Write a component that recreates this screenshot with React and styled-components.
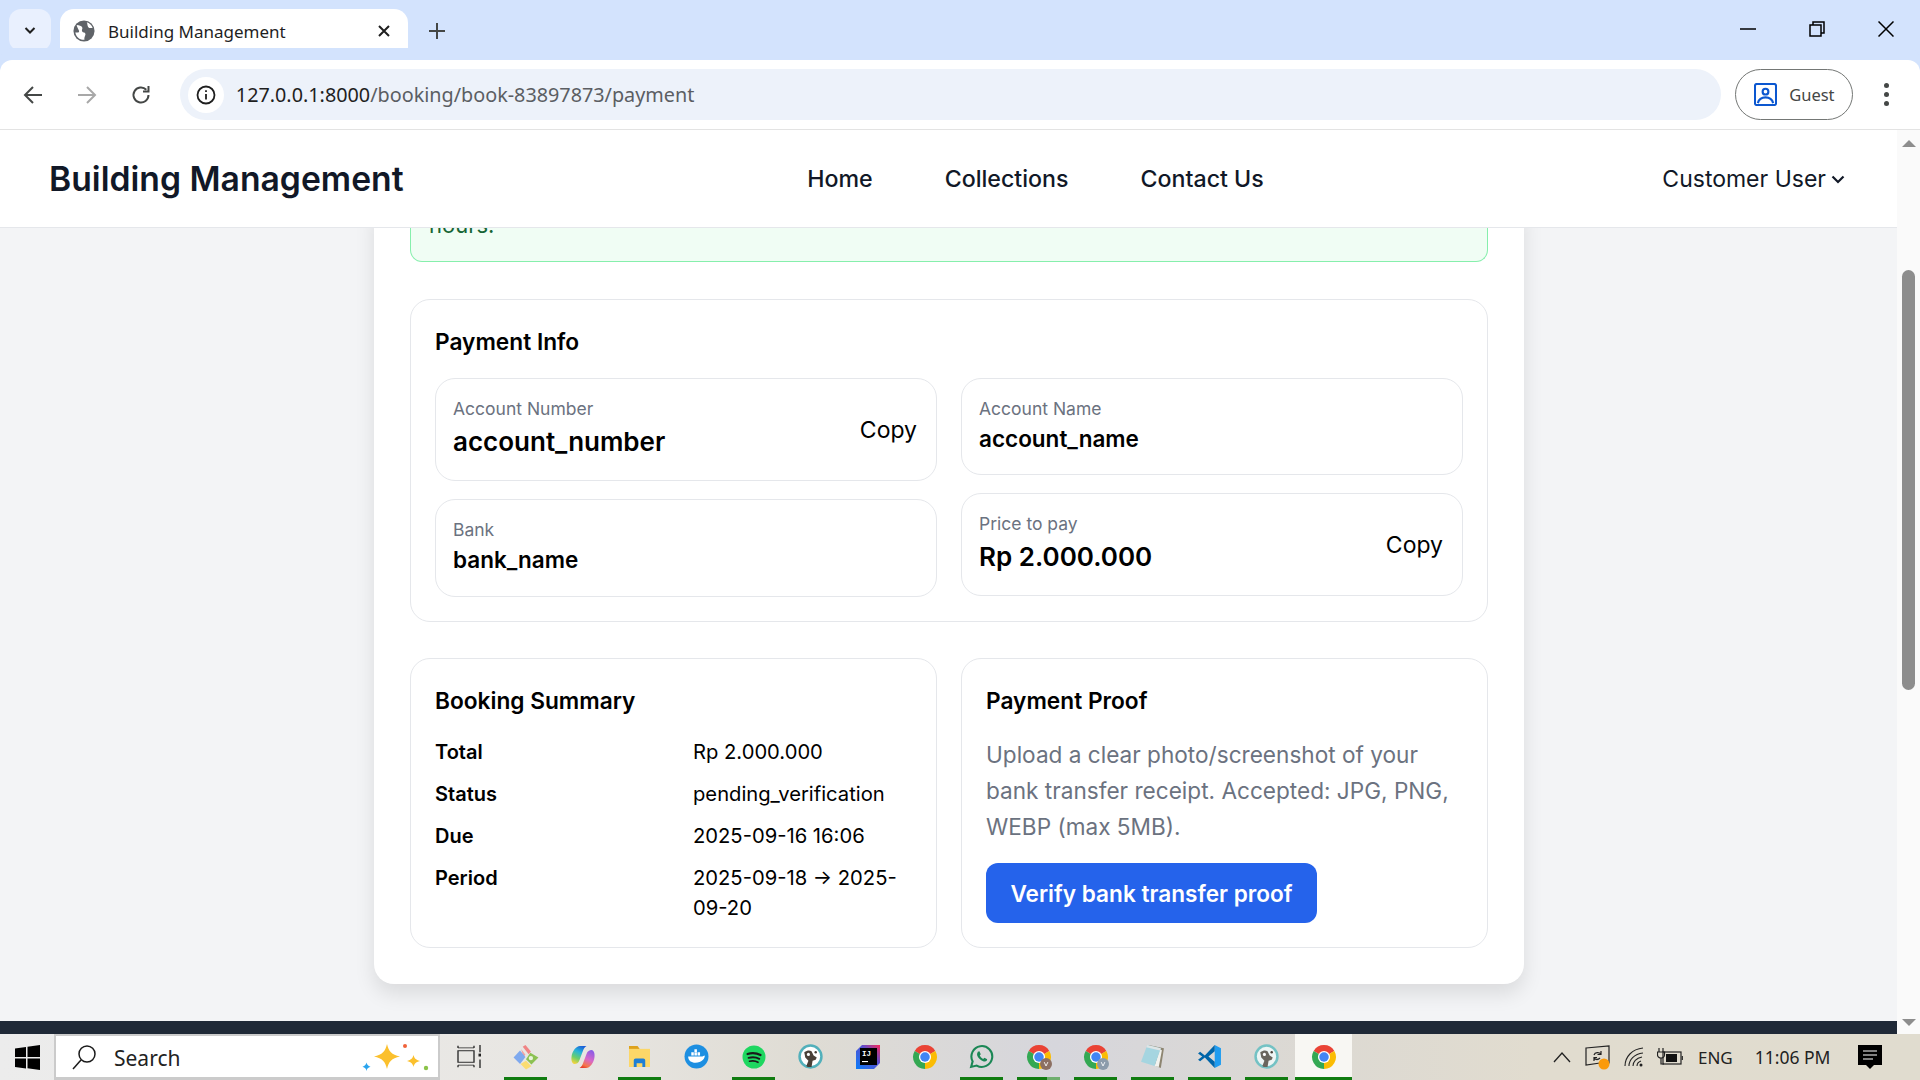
import React from "react";
import styled, { createGlobalStyle } from "styled-components";

const GlobalStyle = createGlobalStyle`
  html, body { margin: 0; padding: 0; height: 100%; overflow: hidden; }
  #root { width: 1920px; height: 1080px; }
  * { box-sizing: border-box; }
`;

const PAGE_FONT = `"Inter", "Noto Sans", sans-serif`;
const UI_FONT = `"Noto Sans", "Open Sans", sans-serif`;

function ChromeLogo({ badge }) {
  return (
    <svg width="26" height="26" viewBox="0 0 24 24">
      <path d="M12 12L2.47 6.5A11 11 0 0 1 21.53 6.5Z" fill="#ea4335" />
      <path d="M12 12L21.53 6.5A11 11 0 0 1 12 23Z" fill="#fbbc04" />
      <path d="M12 12L12 23A11 11 0 0 1 2.47 6.5Z" fill="#34a853" />
      <circle cx="12" cy="12" r="5.6" fill="#fff" />
      <circle cx="12" cy="12" r="4.4" fill="#4285f4" />
      {badge && <circle cx="18.5" cy="18.5" r="5.5" fill={badge} />}
      {badge && (
        <path d="M16.8 16.7l1.7 3.6 1.7-3.6" fill="none" stroke="#fff" strokeWidth="0.8" />
      )}
    </svg>
  );
}

const Sheep = ({ faded }) => (
  <svg width="25" height="25" viewBox="0 0 24 24">
    <circle cx="12" cy="12" r="10.5" fill={faded ? "#eef5f4" : "#fff"} stroke={faded ? "#74c2c4" : "#52b0bb"} strokeWidth="2.4" />
    <path d="M6 8c3-2 5-2 7-1l2 4 3 2-1 2-3 1-1 6c-2 .5-4 0-5-1l2-5-3-3z" fill={faded ? "#6a665e" : "#4a4038"} />
    <circle cx="10" cy="10" r="1.5" fill="#fff" />
    <circle cx="17" cy="8" r="1.2" fill="#4a4038" />
  </svg>
);

function IdeaArt() {
  return (
    <svg width="24" height="24" viewBox="0 0 24 24">
      <defs>
        <linearGradient id="ijBg" x1="0" y1="1" x2="1" y2="0">
          <stop offset="0" stopColor="#087cfa" />
          <stop offset="0.6" stopColor="#5a4fcf" />
          <stop offset="1" stopColor="#fe2857" />
        </linearGradient>
      </defs>
      <path d="M6 0h18v18l-6 6H0V6z" fill="url(#ijBg)" />
      <rect x="4" y="3" width="17" height="17" fill="#000" />
      <text x="6" y="11" fontFamily="Liberation Mono, monospace" fontSize="7.500" fontWeight="700" fill="#fff">IJ</text>
      <rect x="6" y="16" width="6" height="1.100" fill="#fff" />
    </svg>
  );
}

const pins = [
  {
    id: "taskview",
    art: (
      <svg width="24" height="23" viewBox="0 0 24 32" preserveAspectRatio="none" fill="none" stroke="#222" strokeWidth="1.300">
        <path d="M1 4h16M1 28h16M1 1v3M17 1v3M1 28v3M17 28v3" />
        <rect x="1" y="8" width="16" height="16" />
        <path d="M23 0v10M23 20v12" />
        <rect x="21.500" y="12" width="3" height="4" fill="#222" stroke="none" />
      </svg>
    ),
  },
  {
    id: "kraken",
    on: true,
    art: (
      <svg width="26" height="26" viewBox="0 0 24 24">
        <path d="M9 2.500l2.500-1.500 5 6-2 2.500z" fill="#f08484" />
        <path d="M7.500 4.500l4 5.500-2 2z" fill="#f5a0a0" />
        <path d="M16 8l7.500 4.500-6.500 6.500-5-5z" fill="#8cc152" />
        <path d="M12 15.500l5 5-5 3-5-5z" fill="#fbdc72" />
        <path d="M6.500 6l5 6-5 6.500L.5 12.500z" fill="#7fa9ee" />
        <circle cx="16.500" cy="13" r="2" fill="#e9f3dc" />
      </svg>
    ),
  },
  {
    id: "copilot",
    art: (
      <svg width="26" height="24" viewBox="0 0 24 24">
        <defs>
          <linearGradient id="cpA" x1="0.7" y1="0" x2="0.3" y2="1">
            <stop offset="0" stopColor="#1c5fd8" />
            <stop offset="0.35" stopColor="#27b5d8" />
            <stop offset="0.7" stopColor="#6ccf6a" />
            <stop offset="1" stopColor="#f2d33c" />
          </linearGradient>
          <linearGradient id="cpB" x1="0.7" y1="0" x2="0.3" y2="1">
            <stop offset="0" stopColor="#8a5ce6" />
            <stop offset="0.5" stopColor="#d868c8" />
            <stop offset="0.85" stopColor="#f5784a" />
            <stop offset="1" stopColor="#e8402e" />
          </linearGradient>
        </defs>
        <path d="M9 1h6.500c-2 1-3 3-4 6l-3 8c-1 3-3 4-5 4-2 0-3.500-3-3-7C1.200 6 5 1 9 1z" fill="url(#cpA)" />
        <path d="M15 23H8.500c2-1 3-3 4-6l3-8c1-3 3-4 5-4 2 0 3.500 3 3 7-.7 6-4.500 11-8.500 11z" fill="url(#cpB)" />
      </svg>
    ),
  },
  {
    id: "files",
    on: true,
    art: (
      <svg width="23" height="21" viewBox="0 0 24 22">
        <path d="M1 0h9l2 3v4H1z" fill="#dea21c" />
        <rect x="1" y="3" width="22" height="19" fill="#fcd768" />
        <path d="M6 22v-7a2 2 0 0 1 2-2h8a2 2 0 0 1 2 2v7h-3v-4H9v4z" fill="#1e7fd6" />
      </svg>
    ),
  },
  {
    id: "docker",
    art: (
      <svg width="25" height="25" viewBox="0 0 24 24">
        <circle cx="12" cy="12" r="11.500" fill="#1d8fe1" />
        <path d="M4 12h13c1 0 2-1 3-1 0 3-3 7-9 7-4 0-7-2-7-6z" fill="#fff" />
        <path d="M7 8h2.400v3H7zM10 8h2.400v3H10zM13 8h2.400v3H13zM10 5h2.400v2.600H10z" fill="#fff" />
      </svg>
    ),
  },
  {
    id: "spotify",
    on: true,
    art: (
      <svg width="24" height="24" viewBox="0 0 24 24" fill="none" stroke="#1a1a1a" strokeLinecap="round">
        <circle cx="12" cy="12" r="11.500" fill="#1ed760" stroke="none" />
        <path d="M5.500 9c4.500-1.300 9-1 13 1" strokeWidth="2.200" />
        <path d="M6.500 12.800c3.800-1 7.500-.8 10.800 1" strokeWidth="1.900" />
        <path d="M7.500 16.300c3-.7 6-.5 8.500 1" strokeWidth="1.600" />
      </svg>
    ),
  },
  { id: "sheep", art: <Sheep /> },
  { id: "idea", art: <IdeaArt /> },
  { id: "chrome", art: <ChromeLogo /> },
  {
    id: "whatsapp",
    on: true,
    art: (
      <svg width="25" height="25" viewBox="0 0 24 24" fill="none" stroke="#1b8755" strokeWidth="2">
        <path d="M2 22l1.500-5.300A10 10 0 1 1 7.400 20.700z" />
        <path d="M8.500 7.500l1.500-.5 1.300 2.800-1 1.300c.8 1.500 1.800 2.500 3.300 3.200l1.200-1.100 2.700 1.400-.5 1.500c-1 1.200-3 1-5.300-.5-2.500-1.700-4.200-4-4-6z" fill="#1b8755" stroke="none" />
      </svg>
    ),
  },
  { id: "chrome-v1", on: true, split: true, art: <ChromeLogo badge="#8c6f63" /> },
  { id: "chrome-v2", on: true, art: <ChromeLogo badge="#8c9bab" /> },
  {
    id: "notepad",
    on: true,
    art: (
      <svg width="25" height="25" viewBox="0 0 24 24">
        <path d="M8 1l15 3-3 19-5-2z" fill="#8d8571" />
        <path d="M19 5l2 1-3 16-4-1z" fill="#f2f2ee" />
        <path d="M7 1l13 3-6 17L1 17z" fill="#a5d5e0" />
        <path d="M7 1l13 3-.8 2.200L6 3z" fill="#dfe5e6" />
      </svg>
    ),
  },
  {
    id: "vscode",
    on: true,
    art: (
      <svg width="25" height="25" viewBox="0 0 24 24">
        <path d="M17 1l6 3v16l-6 3z" fill="#1f9cf0" />
        <path d="M17 1L7.500 11 3 7.500 1 9l4 3-4 3 2 1.500L7.500 13 17 23v-6l-6-5 6-5z" fill="#0065a9" />
      </svg>
    ),
  },
  { id: "sheep-2", on: true, art: <Sheep faded /> },
  { id: "chrome-active", on: true, active: true, art: <ChromeLogo /> },
];

function App() {
  return (
    <>
      <GlobalStyle />
      <Screen>
        <TabStrip>
          <TabSearchButton>
            <svg width="16" height="16" viewBox="0 0 16 16" fill="none" stroke="#1f1f1f" strokeWidth="2">
              <path d="M3.500 6l4.500 4.500L12.500 6" />
            </svg>
          </TabSearchButton>
          <Tab>
            <svg width="22" height="22" viewBox="0 0 24 24">
              <circle cx="12" cy="12" r="11.500" fill="#5f6368" />
              <path d="M4 5.500c3 0 5 1 6 2.500s-1 3 0 4.500 3 .5 3.500 2.500-1.500 3-1 6.500c-5 .5-9-3-10-8 2 0 3 .5 4-.5s-2-4-2.500-7.500zM15 2.500c3 1 5 3 6.500 6-2 .5-4 .5-5-1s-.5-3-1.500-5z" fill="#fff" />
            </svg>
            <TabTitle>Building Management</TabTitle>
            <svg width="14" height="14" viewBox="0 0 14 14" stroke="#1f1f1f" strokeWidth="2">
              <path d="M2 2l10 10M12 2L2 12" />
            </svg>
          </Tab>
          <NewTab>
            <svg width="18" height="18" viewBox="0 0 18 18" stroke="#444746" strokeWidth="2">
              <path d="M9 1v16M1 9h16" />
            </svg>
          </NewTab>
          <WindowControls>
            <WindowButton>
              <svg width="16" height="16" viewBox="0 0 16 16" stroke="#000" strokeWidth="1.500">
                <path d="M0 8h16" />
              </svg>
            </WindowButton>
            <WindowButton>
              <svg width="16" height="16" viewBox="0 0 16 16" fill="none" stroke="#000" strokeWidth="1.500">
                <rect x="1" y="4" width="11" height="11" />
                <path d="M4 4V1h11v11h-3" />
              </svg>
            </WindowButton>
            <WindowButton>
              <svg width="16" height="16" viewBox="0 0 16 16" stroke="#000" strokeWidth="1.500">
                <path d="M0.500 0.500l15 15M15.500 0.500l-15 15" />
              </svg>
            </WindowButton>
          </WindowControls>
        </TabStrip>

        <Toolbar>
          <NavButtons>
            <ToolIcon>
              <svg width="20" height="20" viewBox="0 0 20 20" fill="none" stroke="#444746" strokeWidth="2">
                <path d="M19 10H2M10 2l-8 8 8 8" />
              </svg>
            </ToolIcon>
            <ToolIcon>
              <svg width="20" height="20" viewBox="0 0 20 20" fill="none" stroke="#a8a8a8" strokeWidth="2">
                <path d="M1 10h17M10 2l8 8-8 8" />
              </svg>
            </ToolIcon>
            <ToolIcon>
              <svg width="20" height="20" viewBox="0 0 20 20" fill="none" stroke="#444746" strokeWidth="2">
                <path d="M17.500 10a7.500 7.500 0 1 1-2.200-5.300" />
                <path d="M17.500 1v5.500H12" />
              </svg>
            </ToolIcon>
          </NavButtons>
          <Omnibox>
            <InfoBubble>
              <svg width="20" height="20" viewBox="0 0 20 20" fill="none" stroke="#1f1f1f" strokeWidth="1.800">
                <circle cx="10" cy="10" r="8.500" />
                <path d="M10 9v5.500" />
                <path d="M10 5.200v1.800" />
              </svg>
            </InfoBubble>
            <Url>
              <UrlHost>127.0.0.1:8000</UrlHost>/booking/book-83897873/payment
            </Url>
          </Omnibox>
          <ProfileChip>
            <svg width="23" height="23" viewBox="0 0 24 24" fill="none" stroke="#0b57d0" strokeWidth="2.200">
              <rect x="1" y="1" width="22" height="22" rx="2" />
              <circle cx="12" cy="9" r="3" />
              <path d="M4 21c1-4 4-6 8-6s7 2 8 6" />
            </svg>
            <ProfileLabel>Guest</ProfileLabel>
          </ProfileChip>
          <MenuDots>
            <i /><i /><i />
          </MenuDots>
        </Toolbar>

        <Viewport>
          <PageColumn>
            <NavBar>
              <Brand>Building Management</Brand>
              <NavLinks>
                <NavLink>Home</NavLink>
                <NavLink>Collections</NavLink>
                <NavLink>Contact Us</NavLink>
              </NavLinks>
              <UserMenu>
                Customer User
                <svg width="14" height="14" viewBox="0 0 14 14" fill="none" stroke="#111827" strokeWidth="2.200">
                  <path d="M1.500 4.500L7 10l5.500-5.500" />
                </svg>
              </UserMenu>
            </NavBar>

            <Main>
              <Sheet>
                <Notice>hours.</Notice>

                <Panel>
                  <PanelTitle>Payment Info</PanelTitle>
                  <InfoColumns>
                    <InfoColumn>
                      <InfoBox $tall>
                        <div>
                          <InfoLabel>Account Number</InfoLabel>
                          <InfoValue $large>account_number</InfoValue>
                        </div>
                        <CopyButton>Copy</CopyButton>
                      </InfoBox>
                      <InfoBox>
                        <div>
                          <InfoLabel>Bank</InfoLabel>
                          <InfoValue>bank_name</InfoValue>
                        </div>
                      </InfoBox>
                    </InfoColumn>
                    <InfoColumn>
                      <InfoBox $short>
                        <div>
                          <InfoLabel>Account Name</InfoLabel>
                          <InfoValue>account_name</InfoValue>
                        </div>
                      </InfoBox>
                      <InfoBox $tall>
                        <div>
                          <InfoLabel>Price to pay</InfoLabel>
                          <InfoValue $large>Rp 2.000.000</InfoValue>
                        </div>
                        <CopyButton>Copy</CopyButton>
                      </InfoBox>
                    </InfoColumn>
                  </InfoColumns>
                </Panel>

                <BottomRow>
                  <Panel>
                    <PanelTitle>Booking Summary</PanelTitle>
                    <SummaryGrid>
                      <SummaryKey>Total</SummaryKey>
                      <SummaryValue>Rp 2.000.000</SummaryValue>
                      <SummaryKey>Status</SummaryKey>
                      <SummaryValue>pending_verification</SummaryValue>
                      <SummaryKey>Due</SummaryKey>
                      <SummaryValue>2025-09-16 16:06</SummaryValue>
                      <SummaryKey>Period</SummaryKey>
                      <SummaryValue>2025-09-18 → 2025-09-20</SummaryValue>
                    </SummaryGrid>
                  </Panel>
                  <Panel>
                    <PanelTitle>Payment Proof</PanelTitle>
                    <ProofText>
                      Upload a clear photo/screenshot of your bank transfer receipt. Accepted: JPG, PNG, WEBP (max 5MB).
                    </ProofText>
                    <VerifyButton>Verify bank transfer proof</VerifyButton>
                  </Panel>
                </BottomRow>
              </Sheet>
            </Main>
            <FooterStrip />
          </PageColumn>

          <Scrollbar>
            <ScrollArrow $up />
            <ScrollTrack>
              <ScrollThumb />
            </ScrollTrack>
            <ScrollArrow />
          </Scrollbar>
        </Viewport>

        <Taskbar>
          <StartSlot>
            <svg width="25" height="25" viewBox="0 0 25 25" fill="#000">
              <path d="M0 3.500l11-1.500v10H0zM12.500 1.800L25 0v12H12.500zM0 13.500h11v10L0 22zM12.500 13.500H25V25l-12.500-1.800z" />
            </svg>
          </StartSlot>
          <SearchBox>
            <svg width="26" height="26" viewBox="0 0 26 26" fill="none" stroke="#1a1a1a" strokeWidth="1.500">
              <circle cx="16" cy="10" r="8" />
              <path d="M10 16L2 25" />
            </svg>
            <SearchText>Search</SearchText>
            <Sparkles viewBox="0 0 70 30" width="70" height="30">
              <path d="M6.500 20.500c.6 2.200 1.400 3.300 4 4.300-2.600.8-3.400 1.700-4 4.200-.6-2.500-1.400-3.400-4-4.200 2.600-1 3.400-2.100 4-4.300z" fill="#2aa4ee" />
              <path d="M27 2c1.700 7.500 4.500 10.500 13 12.500-8.500 2-11.300 5-13 12.500-1.700-7.500-4.500-10.500-13-12.500 8.500-2 11.300-5 13-12.500z" fill="#fbc02d" />
              <path d="M53.500 13c.8 3.200 2 4.600 6.500 6-4.500 1.200-5.700 2.800-6.500 6-.8-3.200-2-4.800-6.500-6 4.500-1.400 5.700-2.800 6.500-6z" fill="#fbc02d" />
              <circle cx="45" cy="4" r="2" fill="#f0623a" />
              <circle cx="66" cy="26" r="2.200" fill="#8bc34a" />
            </Sparkles>
          </SearchBox>
          {pins.map((pin) => (
            <PinSlot key={pin.id} $on={pin.on} $active={pin.active} $split={pin.split}>
              {pin.art}
            </PinSlot>
          ))}
          <Tray>
            <TrayIcon>
              <svg width="18" height="12" viewBox="0 0 18 12" fill="none" stroke="#222" strokeWidth="1.300">
                <path d="M1 11l8-9 8 9" />
              </svg>
            </TrayIcon>
            <TrayIcon>
              <svg width="26" height="26" viewBox="0 0 26 26" fill="none" stroke="#222" strokeWidth="1.200">
                <path d="M1 4l23-2v17H15l-14 2z" />
                <path d="M9 11c1-3 5-3 7-1M16 7v3.500h-3.500M15 14c-2 2-4 2-6 0M9 17v-3.500h3" />
                <circle cx="19" cy="20" r="5.500" fill="#fa9a0a" stroke="none" />
              </svg>
            </TrayIcon>
            <TrayIcon>
              <svg width="20" height="20" viewBox="0 0 20 20" fill="none" stroke="#222" strokeWidth="1.100">
                <path d="M1 19C1 10 8 2 19 1M5 19c0-6 5-12 14-13M9 19c0-4 3-8 9-9M13 19c0-2 1-4 4-5" />
                <circle cx="17" cy="18" r="1.500" fill="#222" stroke="none" />
              </svg>
            </TrayIcon>
            <TrayIcon>
              <svg width="26" height="20" viewBox="0 0 26 20" fill="none" stroke="#222" strokeWidth="1.200">
                <path d="M2 1v4M6 1v4M0.500 5h7v3c0 2-2 3-3.500 3S0.500 10 0.500 8zM4 11v6h3" />
                <rect x="6" y="5" width="18" height="12" />
                <rect x="9" y="7" width="11" height="8" fill="#111" stroke="none" />
                <path d="M25.300 9v4" />
              </svg>
            </TrayIcon>
            <TrayText>ENG</TrayText>
            <TrayText $clock>11:06 PM</TrayText>
            <NotifyButton>
              <svg width="24" height="24" viewBox="0 0 24 24">
                <path d="M0 0h24v20h-8l-4 4-4-4H0z" fill="#000" />
                <path d="M5 6h14M5 10h14M5 14h10" stroke="#fff" strokeWidth="1.200" />
              </svg>
            </NotifyButton>
          </Tray>
        </Taskbar>
      </Screen>
    </>
  );
}

const Screen = styled.div`
  width: 1920px;
  height: 1080px;
  display: flex;
  flex-direction: column;
  overflow: hidden;
  background: #fff;
  font-family: ${PAGE_FONT};
`;
const TabStrip = styled.div`
  height: 60px;
  flex: none;
  display: flex;
  align-items: flex-end;
  background: #d3e3fd;
  padding-left: 9px;
`;
const TabSearchButton = styled.div`
  width: 42px;
  height: 42px;
  margin-bottom: 9px;
  border-radius: 12px;
  background: #e9f0fe;
  display: flex;
  align-items: center;
  justify-content: center;
`;
const Tab = styled.div`
  width: 348px;
  height: 51px;
  margin-left: 9px;
  padding: 0 17px 7px 13px;
  border-radius: 14px 14px 0 0;
  background: #fff;
  display: flex;
  align-items: center;
`;
const TabTitle = styled.span`
  flex: 1;
  margin-left: 13px;
  font: 400 17px ${UI_FONT};
  color: #1f1f1f;
`;
const NewTab = styled.div`
  width: 58px;
  height: 60px;
  padding-top: 1px;
  display: flex;
  align-items: center;
  justify-content: center;
`;
const WindowControls = styled.div`
  margin-left: auto;
  height: 60px;
  display: flex;
`;
const WindowButton = styled.div`
  width: 69px;
  display: flex;
  align-items: center;
  justify-content: center;
  padding-bottom: 2px;
`;
const Toolbar = styled.div`
  height: 70px;
  flex: none;
  display: flex;
  align-items: center;
  background: #fff;
  border-radius: 12px 12px 0 0;
  border-bottom: 1px solid #e3e3e3;
  position: relative;
  box-shadow: 0 -12px 0 #d3e3fd;
`;
const NavButtons = styled.div`
  display: flex;
  width: 180px;
  padding-left: 6px;
`;
const ToolIcon = styled.div`
  width: 54px;
  display: flex;
  justify-content: center;
`;
const Omnibox = styled.div`
  width: 1543px;
  height: 51px;
  border-radius: 26px;
  background: #edf2fa;
  display: flex;
  align-items: center;
  padding-left: 8px;
`;
const InfoBubble = styled.div`
  width: 36px;
  height: 36px;
  border-radius: 50%;
  background: #fff;
  display: flex;
  align-items: center;
  justify-content: center;
`;
const Url = styled.div`
  margin-left: 12px;
  font: 400 19.8px ${UI_FONT};
  color: #5b5e63;
`;
const UrlHost = styled.span`
  color: #1f1f1f;
`;
const ProfileChip = styled.div`
  width: 118px;
  height: 51px;
  margin-left: 14px;
  border: 1.5px solid #747775;
  border-radius: 26px;
  display: flex;
  align-items: center;
  padding-left: 18px;
`;
const ProfileLabel = styled.span`
  margin-left: 12px;
  font: 400 16.5px ${UI_FONT};
  color: #444746;
`;
const MenuDots = styled.div`
  width: 67px;
  display: flex;
  flex-direction: column;
  align-items: center;
  gap: 4px;

  i {
    display: block;
    width: 5px;
    height: 5px;
    border-radius: 50%;
    background: #444746;
  }
`;
const Viewport = styled.div`
  flex: 1;
  min-height: 0;
  display: flex;
`;
const PageColumn = styled.div`
  flex: 1;
  min-width: 0;
  display: flex;
  flex-direction: column;
`;
const NavBar = styled.header`
  height: 98px;
  flex: none;
  display: flex;
  align-items: center;
  justify-content: space-between;
  padding: 0 52px 0 49px;
  background: #fff;
  border-bottom: 1px solid #e5e7eb;
  position: relative;
  z-index: 2;
`;
const Brand = styled.div`
  font-size: 33.7px;
  font-weight: 600;
  color: #111827;
`;
const NavLinks = styled.nav`
  display: flex;
  gap: 72px;
  margin-left: 5px;
`;
const NavLink = styled.a`
  font-size: 23.2px;
  font-weight: 500;
  color: #111827;
`;
const UserMenu = styled.div`
  display: flex;
  align-items: center;
  gap: 5px;
  font-size: 23px;
  font-weight: 400;
  color: #111827;
`;
const Main = styled.main`
  flex: 1;
  min-height: 0;
  overflow: hidden;
  background: #f3f4f6;
  display: flex;
  flex-direction: column;
  justify-content: flex-end;
  align-items: flex-start;
  padding: 0 0 37px 374px;
`;
const Sheet = styled.section`
  width: 1150px;
  flex: none;
  padding: 0 36px 36px;
  background: #fff;
  border-radius: 0 0 20px 20px;
  box-shadow: 0 10px 20px rgba(0, 0, 0, 0.1);
  display: flex;
  flex-direction: column;
  gap: 36px;
`;
const Notice = styled.div`
  margin-bottom: 1px;
  padding: 0 18px 18px;
  background: #f0fdf4;
  border: 1px solid #86efac;
  border-top: none;
  border-radius: 0 0 12px 12px;
  font-size: 22px;
  line-height: 36px;
  color: #166534;
`;
const Panel = styled.div`
  flex: 1;
  min-width: 0;
  padding: 24px;
  background: #fff;
  border: 1px solid #e5e7eb;
  border-radius: 20px;
`;
const PanelTitle = styled.h3`
  margin: 0;
  font-size: 22.7px;
  line-height: 36px;
  font-weight: 600;
  color: #000;
`;
const InfoColumns = styled.div`
  display: flex;
  gap: 24px;
  margin-top: 18px;
`;
const InfoColumn = styled.div`
  flex: 1;
  min-width: 0;
  display: flex;
  flex-direction: column;
  gap: 18px;
`;
const InfoBox = styled.div`
  height: ${(p) => (p.$tall ? 103 : p.$short ? 97 : 98)}px;
  padding: 18px 19px 0 17px;
  background: #fff;
  border: 1px solid #e5e7eb;
  border-radius: 20px;
  display: flex;
  justify-content: space-between;
  align-items: flex-start;
`;
const InfoLabel = styled.div`
  font-size: 17.5px;
  line-height: 24px;
  color: #6b7280;
`;
const InfoValue = styled.div`
  margin-top: ${(p) => (p.$large ? 3 : 0)}px;
  font-size: ${(p) => (p.$large ? 26 : 22.5)}px;
  line-height: 36px;
  font-weight: 600;
  color: #000;
`;
const CopyButton = styled.button`
  margin-top: 15px;
  padding: 0;
  border: none;
  background: none;
  font-family: ${PAGE_FONT};
  font-size: 23px;
  line-height: 36px;
  color: #000;
`;
const BottomRow = styled.div`
  display: flex;
  gap: 24px;
`;
const SummaryGrid = styled.div`
  display: grid;
  grid-template-columns: 258px 1fr;
  row-gap: 12px;
  margin-top: 18px;
`;
const SummaryKey = styled.div`
  font-size: 20px;
  line-height: 30px;
  font-weight: 600;
  color: #000;
`;
const SummaryValue = styled.div`
  font-size: 20.2px;
  line-height: 30px;
  color: #000;
`;
const ProofText = styled.p`
  margin: 18px 0 18px;
  font-size: 22.6px;
  line-height: 36px;
  color: #6b7280;
`;
const VerifyButton = styled.button`
  width: 331px;
  height: 60px;
  border: none;
  border-radius: 12px;
  background: #2563eb;
  font-family: ${PAGE_FONT};
  font-size: 22.6px;
  font-weight: 600;
  color: #fff;
`;
const FooterStrip = styled.footer`
  height: 13px;
  flex: none;
  background: #1f2937;
`;
const Scrollbar = styled.aside`
  width: 23px;
  flex: none;
  display: flex;
  flex-direction: column;
  align-items: center;
  background: #fafafa;
`;
const ScrollArrow = styled.div`
  flex: none;
  width: 0;
  height: 0;
  margin: ${(p) => (p.$up ? "10px 0 0" : "0 0 8px")};
  border-left: 7px solid transparent;
  border-right: 7px solid transparent;
  ${(p) => (p.$up ? "border-bottom: 7px solid #8d8d8d;" : "border-top: 7px solid #8d8d8d;")}
`;
const ScrollTrack = styled.div`
  flex: 1;
  width: 100%;
  padding: 123px 5px 0;
`;
const ScrollThumb = styled.div`
  height: 420px;
  border-radius: 7px;
  background: #8d8d8d;
`;
const Taskbar = styled.div`
  height: 46px;
  flex: none;
  display: flex;
  background: linear-gradient(90deg, #ececec 0%, #e8e6e2 30%, #dfdcd4 42%, #d6d6dc 55%, #dcd9d3 68%, #e1dccf 80%, #e0dccf 100%);
`;
const StartSlot = styled.div`
  width: 54px;
  display: flex;
  align-items: center;
  justify-content: center;
`;
const SearchBox = styled.div`
  width: 386px;
  border: 2px solid #cbcbcb;
  border-bottom-width: 3px;
  background: #fff;
  display: flex;
  align-items: center;
  padding-left: 15px;
`;
const SearchText = styled.span`
  margin-left: 17px;
  padding-top: 3px;
  font: 400 21px ${UI_FONT};
  color: #222;
`;
const Sparkles = styled.svg`
  margin-left: auto;
  margin-right: 8px;
`;
const PinSlot = styled.div`
  position: relative;
  width: 57px;
  display: flex;
  align-items: center;
  justify-content: center;
  padding-bottom: 1px;
  background: ${(p) => (p.$active ? "#f8f7f3" : "transparent")};

  &::after {
    content: "";
    display: ${(p) => (p.$on ? "block" : "none")};
    position: absolute;
    left: ${(p) => (p.$active ? 0 : 7)}px;
    right: ${(p) => (p.$active ? 0 : 7)}px;
    bottom: 0;
    height: 3px;
    background: ${(p) => (p.$split ? "linear-gradient(90deg, #107c10 70%, #6fae6f 70%)" : "#107c10")};
  }
`;
const Tray = styled.div`
  flex: 1;
  display: flex;
  align-items: center;
  justify-content: flex-end;
  padding-right: 38px;
`;
const TrayIcon = styled.div`
  width: 36px;
  display: flex;
  justify-content: center;
`;
const TrayText = styled.span`
  margin-left: ${(p) => (p.$clock ? 22 : 10)}px;
  font: 400 ${(p) => (p.$clock ? 17.5 : 17)}px ${UI_FONT};
  color: #222;
`;
const NotifyButton = styled.div`
  margin-left: 27.5px;
  display: flex;
`;

export default App;
